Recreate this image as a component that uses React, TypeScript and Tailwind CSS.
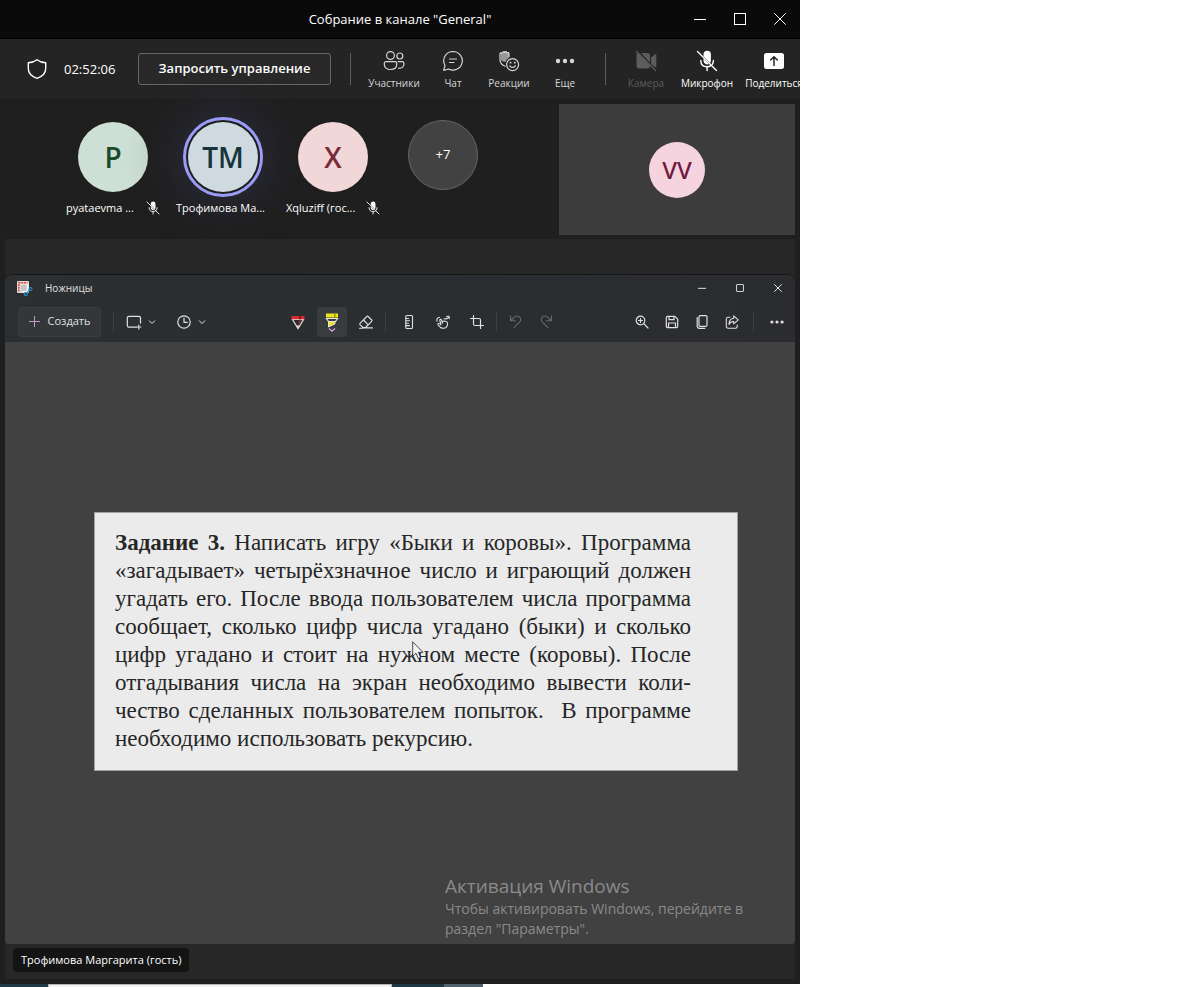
import type { ReactNode } from "react";

type SvgProps = { size?: number; width?: string; children: ReactNode };

function Icon({ size = 20, width = "1.2", children }: SvgProps) {
  return (
    <svg
      width={size}
      height={size}
      viewBox={`0 0 ${size} ${size}`}
      fill="none"
      stroke="currentColor"
      strokeWidth={width}
      strokeLinecap="round"
      strokeLinejoin="round"
      aria-hidden="true"
      className="shrink-0"
    >
      {children}
    </svg>
  );
}

const ShieldIcon = () => (
  <Icon width="1.4">
    <path d="M10 .8C12.5 2.8 15.500 3.700 18.700 3.800V9.500C18.700 14.300 15.500 17.500 10 19.300C4.500 17.500 1.300 14.300 1.300 9.500V3.800C4.500 3.700 7.500 2.800 10 .8Z" />
  </Icon>
);

const PeopleIcon = () => (
  <Icon size={22}>
    <circle cx="7.500" cy="5.500" r="3.900" />
    <circle cx="16.800" cy="6" r="3" />
    <path d="M3 11.600h9a1.700 1.700 0 0 1 1.700 1.700v1.200c0 3-2.500 5-6.200 5s-6.200-2-6.200-5v-1.200A1.700 1.700 0 0 1 3 11.600Z" />
    <path d="M15.200 11.600h4a1.700 1.700 0 0 1 1.700 1.700v1c0 2.700-2.200 4.200-5.300 3.900" />
  </Icon>
);

const ChatIcon = () => (
  <Icon size={22}>
    <path d="M11 1.500a9.300 9.300 0 1 1-4.400 17.500L1.700 20.300l1.300-4.800A9.300 9.300 0 0 1 11 1.500Z" />
    <path d="M7.500 9h7M7.500 12.500h4.500" />
  </Icon>
);

const ReactionIcon = () => (
  <Icon size={22}>
    <path
      d="M3 9V3.500a1 1 0 0 1 2-.3V2a1 1 0 0 1 2-.2 1 1 0 0 1 2 .3V3a1 1 0 0 1 2 .3v4.500A7 7 0 0 0 7.500 12L5 11.500C3.500 11 3 10.500 3 9Z"
      fill="currentColor"
      fillOpacity=".65"
      stroke="none"
    />
    <path d="M7 16.200C3.800 15 2 12.500 2 9.500V3.800c0-1 1.500-1.300 2-.6.200-1.300 1.700-1.700 2.400-.9.700-1 2.300-.7 2.500.5.900-.6 2.100-.1 2.100 1v2.700" />
    <circle cx="14.600" cy="14.600" r="6" />
    <path d="M11.800 15.800c.7 2.200 4.900 2.200 5.600 0" />
    <path d="M12.500 12.700h.1M16.700 12.700h.1" strokeWidth="1.800" />
  </Icon>
);

const DotsIcon = ({ small = false }: { small?: boolean }) => (
  <svg width={small ? 16 : 22} height={small ? 16 : 22} viewBox="0 0 22 22" fill="currentColor" aria-hidden="true">
    <circle cx="4" cy="11" r="2.200" />
    <circle cx="11" cy="11" r="2.200" />
    <circle cx="18" cy="11" r="2.200" />
  </svg>
);

const CameraOffIcon = () => (
  <Icon size={22}>
    <path d="M1.500 5.500A2 2 0 0 1 3 3l12 12.800V16a2.500 2.500 0 0 1-2.500 2.500h-8.500A2.500 2.500 0 0 1 1.500 16Z" fill="currentColor" stroke="none" />
    <path d="M6 3h6.500A2.500 2.500 0 0 1 15 5.500v7.300Z" fill="currentColor" stroke="none" />
    <path d="M16 7.500l4.300-3.300c.5-.3 1 0 1 .5v12c0 .6-.6.900-1 .6L16 14Z" fill="currentColor" stroke="none" />
    <path d="M1.500 1.500l19 19" />
  </Icon>
);

const MicOffIcon = ({ size = 22 }: { size?: number }) => (
  <svg
    width={size}
    height={size}
    viewBox="0 0 22 22"
    fill="none"
    stroke="currentColor"
    strokeWidth="1.400"
    strokeLinecap="round"
    aria-hidden="true"
    className="shrink-0"
  >
    <path d="M7.500 4.500a3.700 3.700 0 0 1 7.400 0v6c0 1-.3 1.800-.8 2.400L7.500 6.300Z" fill="currentColor" stroke="none" />
    <path d="M7.500 8.500l5.300 5.500a3.700 3.700 0 0 1-5.300-3.300Z" fill="currentColor" stroke="none" />
    <path d="M4.800 10.500c0 4 2.600 6.300 6.300 6.300 1.300 0 2.500-.3 3.500-.9M17.400 10.500c0 1.500-.4 2.800-1.100 3.800M11.100 17v3.500M1.500 1.500l19 19" />
  </svg>
);

const ShareScreenIcon = () => (
  <svg width="22" height="22" viewBox="0 0 22 22" fill="none" aria-hidden="true">
    <rect x="1" y="3" width="20" height="16" rx="2.500" fill="currentColor" />
    <path d="M11 15.500V7M7.700 10L11 6.700 14.300 10" stroke="#242424" strokeWidth="1.500" strokeLinecap="round" strokeLinejoin="round" />
  </svg>
);

const MinimizeIcon = ({ size = 12 }: { size?: number }) => (
  <svg width={size} height={size} viewBox="0 0 12 12" stroke="currentColor" strokeWidth={size < 12 ? "1.500" : "1"} aria-hidden="true">
    <path d="M0 6.500h12" />
  </svg>
);
const CloseIcon = ({ size = 12 }: { size?: number }) => (
  <svg width={size} height={size} viewBox="0 0 12 12" stroke="currentColor" strokeWidth={size < 12 ? "1.500" : "1"} aria-hidden="true">
    <path d="M.3.300l11.400 11.400M11.700.300L.3 11.700" />
  </svg>
);

const ChevronIcon = () => (
  <svg width="8" height="8" viewBox="0 0 8 8" fill="none" stroke="currentColor" aria-hidden="true">
    <path d="M1 2.500l3 3 3-3" />
  </svg>
);

const SnipLogo = () => (
  <svg width="16" height="16" viewBox="0 0 16 16" fill="none" aria-hidden="true">
    <rect x="0" y="1" width="12" height="12" rx="1" fill="#e4ddd8" />
    <path d="M1.800 11.500V2.800h8.700" stroke="#cf4b3a" strokeWidth="1.600" strokeDasharray="2 .8" />
    <rect x="4" y="5" width="5.500" height="6" fill="#c4c2c0" />
    <path d="M10.500 4.500v7h-5" stroke="#f5f5f5" strokeWidth="1.500" />
    <circle cx="13.500" cy="9" r="1.500" stroke="#2b8cc9" strokeWidth="1.200" />
    <circle cx="8.700" cy="14" r="1.500" stroke="#2b8cc9" strokeWidth="1.200" />
    <path d="M9.700 12.800l2.600-2.700" stroke="#2b8cc9" strokeWidth="1.100" />
  </svg>
);

const RectPlusIcon = () => (
  <Icon size={16} width="1.200">
    <path d="M14.500 9V4a1.700 1.700 0 0 0-1.700-1.700H3A1.700 1.700 0 0 0 1.300 4v7.500A1.700 1.700 0 0 0 3 13.200h7.500M12.800 11v4M10.800 13h4" />
  </Icon>
);
const ClockIcon = () => (
  <Icon size={16}>
    <circle cx="8" cy="8" r="6.200" />
    <path d="M8 4v4.300h3.300" />
  </Icon>
);
const PenIcon = () => (
  <svg width="16" height="16" viewBox="0 0 16 16" fill="none" aria-hidden="true">
    <path d="M2.500 5.500L8 14.500l5.500-9Z" fill="#2b2d30" stroke="#e6dcdc" strokeWidth="1.200" />
    <path d="M1.500 2h13v3.200h-13Z" fill="#d92b2b" />
    <path d="M9 2h2v3.200H9Z" fill="#7c1d1d" />
    <path d="M6.500 11.500L8 14.500l1.700-3Z" fill="#e6dcdc" />
    <path d="M9 6.300h2.300L8.500 11Z" fill="#9c2b2b" />
  </svg>
);
const HighlighterIcon = () => (
  <svg width="16" height="20" viewBox="0 0 16 20" fill="none" aria-hidden="true">
    <path d="M2 1.500h12v4H2Z" fill="#f1e31c" />
    <path d="M10 1.500h1.500v4H10Z" fill="#998e10" />
    <path d="M2.500 6.500h11l-2 3h-7Z" stroke="#e5e5dc" strokeWidth="1.200" />
    <path d="M4.500 9.500h6.500v2.300l-6.500 3.200Z" fill="#f1e31c" stroke="#e5e5dc" />
    <path d="M5 16.500L8 19.200l3-2.700" stroke="#cf9fd6" strokeWidth="1.300" />
  </svg>
);
const EraserIcon = () => (
  <Icon size={16} width="1.100">
    <path d="M2 9.300L8.800 2.500a1 1 0 0 1 1.400 0l3.500 3.500a1 1 0 0 1 0 1.400L7.500 13.500H5L2 10.700a1 1 0 0 1 0-1.400ZM5.500 6l4.800 4.800M5 13.900h9.500M1.500 14.300h3" />
  </Icon>
);
const RulerIcon = () => (
  <Icon size={16} width="1.100">
    <rect x="4.800" y="1.500" width="6.700" height="13" rx="1" />
    <path d="M5 4.500h2.500M5 6.800h3.500M5 9.200h2.500M5 11.600h3.500" />
  </Icon>
);
const TouchIcon = () => (
  <Icon size={16} width="1.100">
    <path d="M5.500 13.500L3 10.800c-.7-.9.500-2 1.400-1.200L6 10.700 4.800 6.500c-.3-1.200 1.300-1.600 1.700-.5L7.500 9V7.500c1.300-.8 4.700-.2 5 1.500.3 2.500-.7 5.300-3.500 5.300-1.500 0-2.500-.1-3.500-.8Z" />
    <path d="M2 7.200C1.300 5.300 2.500 3.500 4.500 3.300M9 4.700c2 .5 4-.3 4.800-2M11.500 2.500l2.500-.3.300 2.400" />
  </Icon>
);
const CropIcon = () => (
  <Icon size={16} width="1.200">
    <path d="M4.500 1.500V10a1.500 1.500 0 0 0 1.500 1.500h8.500M1.500 4.500H10A1.500 1.500 0 0 1 11.500 6v8.500" />
  </Icon>
);
const UndoIcon = () => (
  <Icon size={16} width="1.100">
    <path d="M2.500 1.800v5h5M2.800 6.500l3.500-3.300c3.800-3.200 8.500 1.300 5.200 5L5.800 13.800" />
  </Icon>
);
const RedoIcon = () => (
  <Icon size={16} width="1.100">
    <path d="M13.500 1.800v5h-5M13.200 6.500L9.700 3.200C5.900 0 1.200 4.500 4.500 8.200l5.700 5.600" />
  </Icon>
);
const ZoomIcon = () => (
  <Icon size={16} width="1.200">
    <circle cx="6.500" cy="6.500" r="4.300" />
    <path d="M9.700 9.700l4.300 4.300M4.500 6.500h4M6.500 4.500v4" />
  </Icon>
);
const SaveIcon = () => (
  <Icon size={16} width="1.200">
    <path d="M3.500 2.300h7.300l2.900 2.900v7.300a1.200 1.200 0 0 1-1.200 1.200h-9a1.200 1.200 0 0 1-1.200-1.200v-9a1.200 1.200 0 0 1 1.200-1.200Z" />
    <path d="M5 2.500v3.200h5V2.500M4.500 13.500V9h7v4.500" />
  </Icon>
);
const CopyIcon = () => (
  <Icon size={16} width="1.200">
    <rect x="5" y="1.600" width="8" height="10.800" rx="1.200" />
    <path d="M3.200 3.500v8.800a2.100 2.100 0 0 0 2.100 2.100h5.500" />
  </Icon>
);
const ShareIcon = () => (
  <Icon size={16} width="1.100">
    <path d="M6 3.300H4A1.700 1.700 0 0 0 2.300 5v7.500A1.700 1.700 0 0 0 4 14.200h7.500a1.700 1.700 0 0 0 1.700-1.700V11" />
    <path d="M9.700 1.800l4.500 4-4.500 4V7.500C7.500 7.300 6 8.500 5 10.500 5 7 6.800 4.500 9.700 4.200Z" />
  </Icon>
);

function MeetingButton({ label, className, children }: { label: string; className: string; children: ReactNode }) {
  return (
    <button type="button" className={`flex shrink-0 flex-col items-center gap-[3px] pt-[3px] text-[10px] leading-4 whitespace-nowrap ${className}`}>
      {children}
      <span>{label}</span>
    </button>
  );
}

function ToolButton({ label, className = "w-[30px]", children }: { label: string; className?: string; children: ReactNode }) {
  return (
    <button type="button" aria-label={label} className={`flex h-[30px] shrink-0 items-center justify-center ${className}`}>
      {children}
    </button>
  );
}

function Participant({ initials, name, avatar, muted }: { initials: string; name: string; avatar: string; muted: boolean }) {
  return (
    <li className="flex w-[110px] shrink-0 flex-col items-center gap-2">
      <div className={`flex size-[70px] items-center justify-center rounded-full text-[28px] leading-8 font-semibold ${avatar}`}>{initials}</div>
      <div className="flex w-[94px] items-center justify-between text-[11px] leading-4 whitespace-nowrap text-white">
        <span>{name}</span>
        {muted && <MicOffIcon size={14} />}
      </div>
    </li>
  );
}

const taskLines = [
  "«загадывает» четырёхзначное число и играющий должен",
  "угадать его. После ввода пользователем числа программа",
  "сообщает, сколько цифр числа угадано (быки) и сколько",
  "цифр угадано и стоит на нужном месте (коровы). После",
  "отгадывания числа на экран необходимо вывести коли-",
  "чество сделанных пользователем попыток.  В программе",
];

export default function App() {
  return (
    <div className="min-h-screen bg-white font-['Open_Sans','Noto_Sans',sans-serif]">
      <main className="flex min-h-screen w-2/3 flex-col overflow-hidden bg-[#1f1f1f] text-white">
        <header className="grid h-[39px] grid-cols-[1fr_auto_1fr] items-center border-b border-black bg-[#0a0a0a]">
          <h1 className="col-start-2 text-[13px] leading-5">Собрание в канале "General"</h1>
          <div className="flex justify-end">
            <button type="button" aria-label="Свернуть" className="flex h-9 w-10 items-center justify-center"><MinimizeIcon /></button>
            <button type="button" aria-label="Развернуть" className="flex h-9 w-10 items-center justify-center"><span className="size-3 border border-white" /></button>
            <button type="button" aria-label="Закрыть" className="flex h-9 w-10 items-center justify-center"><CloseIcon /></button>
          </div>
        </header>

        <div className="flex h-[60px] items-center overflow-hidden bg-[#242424] pl-[27px]">
          <ShieldIcon />
          <time className="ml-[17px] w-[74px] shrink-0 text-[13px] leading-5">02:52:06</time>
          <button type="button" className="h-8 w-[193px] shrink-0 rounded-[3px] border border-[#666] bg-[#292929] text-[13px] font-semibold whitespace-nowrap">
            Запросить управление
          </button>
          <span className="mr-2 ml-[19px] h-8 w-px shrink-0 bg-[#5c5c5c]" />
          <div className="flex shrink-0 text-[#d6d6d6]">
            <MeetingButton label="Участники" className="w-[70px]"><PeopleIcon /></MeetingButton>
            <MeetingButton label="Чат" className="w-12"><ChatIcon /></MeetingButton>
            <MeetingButton label="Реакции" className="w-16"><ReactionIcon /></MeetingButton>
            <MeetingButton label="Еще" className="w-12"><DotsIcon /></MeetingButton>
          </div>
          <span className="mr-3 ml-4 h-8 w-px shrink-0 bg-[#5c5c5c]" />
          <div className="flex shrink-0">
            <MeetingButton label="Камера" className="w-14 text-[#5c5c5c]"><CameraOffIcon /></MeetingButton>
            <MeetingButton label="Микрофон" className="w-[66px] font-medium"><MicOffIcon /></MeetingButton>
            <MeetingButton label="Поделиться" className="w-[68px] font-medium"><ShareScreenIcon /></MeetingButton>
          </div>
        </div>

        <section aria-label="Участники" className="flex h-[140px] justify-between pt-[5px] pr-[5px] pl-[58px]">
          <ul className="flex pt-[18px]">
            <Participant initials="P" name="pyataevma ..." avatar="bg-[#cee0d5] text-[#184a2b]" muted />
            <Participant
              initials="TM"
              name="Трофимова Ма..."
              avatar="bg-[#cfdae0] text-[#16343b] ring-2 ring-[#1f1f1f] outline-3 outline-offset-2 outline-[#9a9cf8] shadow-[0_0_48px_10px_#2c2d3e]"
              muted={false}
            />
            <Participant initials="X" name="Xqluziff (гос..." avatar="bg-[#f2d7d8] text-[#7a2a38]" muted />
            <li className="-mt-0.5 flex w-[110px] shrink-0 justify-center">
              <button type="button" className="size-[70px] rounded-full border border-[#666] bg-[#424242] text-[13px]">+7</button>
            </li>
          </ul>
          <div className="flex h-[131px] w-[236px] shrink-0 items-center justify-center bg-[#3c3c3c]">
            <div className="flex size-14 items-center justify-center rounded-full bg-[#f5d3df] font-['Noto_Sans',sans-serif] text-2xl leading-8 font-medium text-[#701b3c]">VV</div>
          </div>
        </section>

        <section aria-label="Демонстрация экрана" className="mx-[5px] mb-[5px] flex flex-1 flex-col bg-[#272727] pt-[35px]">
          <div className="flex flex-1 flex-col overflow-hidden rounded-t-lg rounded-b border-t border-[#151515] bg-[#414141]">
            <div className="bg-linear-to-r from-[#2b2f31] via-[#2a2e31] to-[#2b2c30] text-[#e0e0e0]">
              <div className="flex h-[26px] items-center pl-3">
                <SnipLogo />
                <h2 className="ml-3 flex-1 text-[10px]">Ножницы</h2>
                <div className="flex gap-1">
                  <ToolButton label="Свернуть окно" className="w-[34px]"><MinimizeIcon size={8} /></ToolButton>
                  <ToolButton label="Развернуть окно" className="w-[34px]"><span className="size-2 rounded-[1px] border border-[#d0d0d0]" /></ToolButton>
                  <ToolButton label="Закрыть окно" className="w-[34px]"><CloseIcon size={8} /></ToolButton>
                </div>
              </div>
              <div className="flex h-[41px] items-center justify-between pr-[3px] pl-[13px]">
                <div className="flex w-[199px] items-center">
                  <button type="button" className="flex h-[30px] w-[83px] items-center justify-center gap-2 rounded border border-[#3a3e41] bg-[#33373a] text-[11px]">
                    <svg width="11" height="11" viewBox="0 0 11 11" stroke="#c29bc9" aria-hidden="true"><path d="M0 5.500h11M5.500 0v11" /></svg>
                    Создать
                  </button>
                  <span className="mx-3 h-5 w-px bg-[#3b3f42]" />
                  <button type="button" aria-label="Режим фрагмента" className="flex items-center gap-1.5"><RectPlusIcon /><ChevronIcon /></button>
                  <button type="button" aria-label="Задержка" className="ml-5 flex items-center gap-1.5"><ClockIcon /><ChevronIcon /></button>
                </div>
                <div className="flex items-center gap-1">
                  <ToolButton label="Ручка"><PenIcon /></ToolButton>
                  <ToolButton label="Маркер" className="w-[30px] rounded bg-[#383c3f]"><HighlighterIcon /></ToolButton>
                  <ToolButton label="Ластик"><EraserIcon /></ToolButton>
                  <span className="mr-1 h-5 w-px bg-[#3b3f42]" />
                  <ToolButton label="Линейка"><RulerIcon /></ToolButton>
                  <ToolButton label="Рисование касанием"><TouchIcon /></ToolButton>
                  <ToolButton label="Обрезка"><CropIcon /></ToolButton>
                  <span className="h-5 w-px bg-[#3b3f42]" />
                  <div className="flex text-[#66696b]">
                    <ToolButton label="Отменить"><UndoIcon /></ToolButton>
                    <ToolButton label="Повторить"><RedoIcon /></ToolButton>
                  </div>
                </div>
                <div className="flex items-center">
                  <ToolButton label="Масштаб"><ZoomIcon /></ToolButton>
                  <ToolButton label="Сохранить"><SaveIcon /></ToolButton>
                  <ToolButton label="Копировать"><CopyIcon /></ToolButton>
                  <ToolButton label="Поделиться снимком"><ShareIcon /></ToolButton>
                  <span className="mr-2 ml-1.5 h-5 w-px bg-[#3b3f42]" />
                  <ToolButton label="Дополнительно"><DotsIcon small /></ToolButton>
                </div>
              </div>
            </div>

            <div className="relative flex flex-1 items-center pr-[57px] pb-1 pl-[89px]">
              <article className="relative w-full border border-[#a0a0a0] bg-[#ebebeb] pt-4 pr-[46px] pb-[17px] pl-5 font-['Liberation_Serif',serif] text-[23px] leading-7 text-[#262626]">
                <p className="whitespace-pre-wrap">
                  <span className="block [text-align-last:justify]"><b>Задание 3.</b> Написать игру «Быки и коровы». Программа</span>
                  {taskLines.map((line) => (
                    <span key={line} className="block [text-align-last:justify]">{line}</span>
                  ))}
                  <span className="block">необходимо использовать рекурсию.</span>
                </p>
                <svg width="12" height="19" viewBox="0 0 12 19" className="absolute top-1/2 left-1/2 -ml-1" fill="#f4f4f4" stroke="#222" strokeWidth=".8" aria-hidden="true">
                  <path d="M.7.800v14.500l3.300-3.100 2.300 5.300 2.300-1-2.200-5.100h4.600Z" />
                </svg>
              </article>
              <aside className="absolute right-[38px] bottom-[5px] w-[312px] whitespace-nowrap text-[#8a8a8a]">
                <h3 className="text-[19px] leading-[26px]">Активация Windows</h3>
                <p className="text-sm leading-5">
                  Чтобы активировать Windows, перейдите в<br />раздел "Параметры".
                </p>
              </aside>
            </div>
          </div>
          <div className="flex h-[35px] items-start px-2 pt-1">
            <span className="rounded bg-[#141414] px-2 py-1 text-[11px] leading-4 whitespace-nowrap">Трофимова Маргарита (гость)</span>
          </div>
        </section>

        <footer className="flex h-[3px] bg-white">
          <span className="w-12 bg-[#203a45]" />
          <span className="w-[344px] border border-b-0 border-[#b5b5b5] bg-[#f2f2f2]" />
          <span className="w-[52px] bg-[#1e3844]" />
          <span className="w-[39px] bg-[#50636d]" />
        </footer>
      </main>
    </div>
  );
}
